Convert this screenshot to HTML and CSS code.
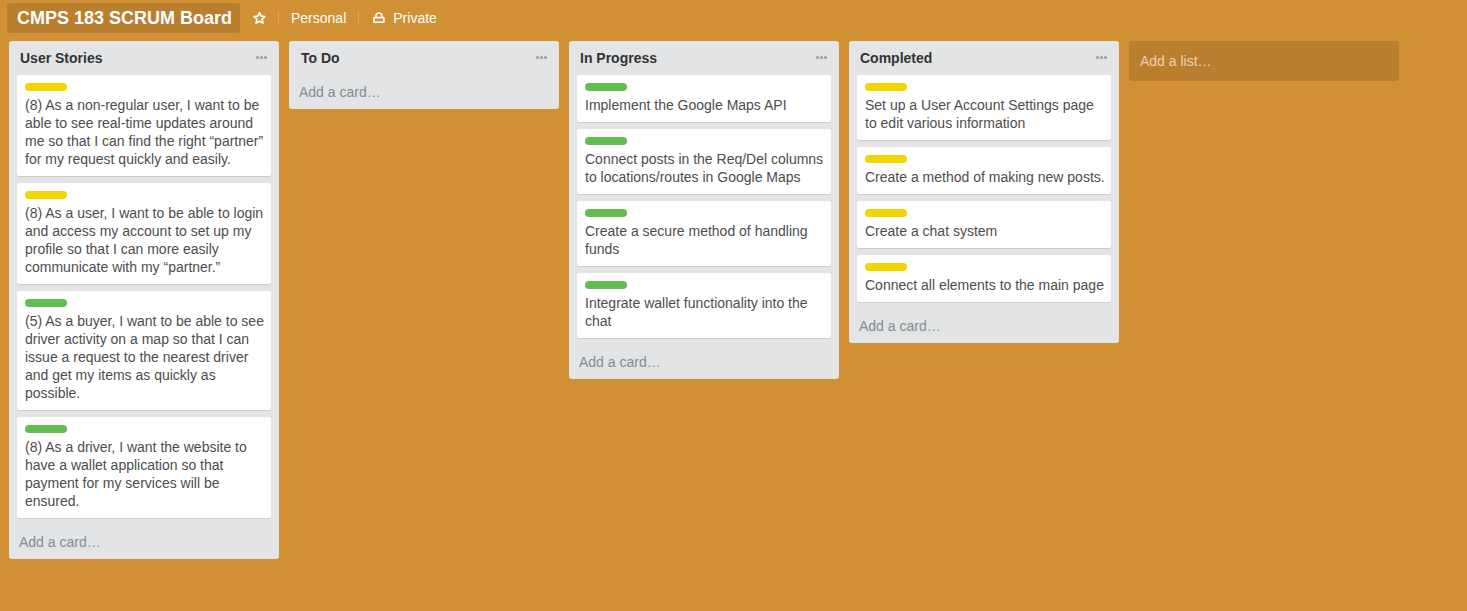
FILE: index.html
```html
<!DOCTYPE html>
<html lang="en">
<head>
<meta charset="utf-8">
<title>CMPS 183 SCRUM Board</title>
<link rel="stylesheet" href="styles.css">
</head>
<body>
<header class="board-header">
  <h1 class="board-name">CMPS 183 SCRUM Board</h1>
  <svg class="star" width="14" height="14" viewBox="0 0 14 14"><path d="M7.500 1.700 9.100 5.200l3.800.4-2.800 2.600.8 3.900-3.400-1.900-3.400 1.900.8-3.900-2.800-2.600 3.800-.4z" fill="none" stroke="#fff" stroke-width="1.700" stroke-linejoin="round"/></svg>
  <span class="divider"></span>
  <span class="org">Personal</span>
  <span class="divider"></span>
  <svg class="lock" width="12" height="12" viewBox="0 0 12 12"><path d="M2.900 5.500V4a3 3 0 0 1 6 0v1.500" fill="none" stroke="#fff" stroke-width="1.500"/><rect x=".9" y="5.600" width="10" height="4.700" rx=".6" fill="none" stroke="#fff" stroke-width="1.600"/></svg>
  <span class="visibility">Private</span>
</header>
<main class="board">
  <section class="list">
    <div class="list-header"><h2>User Stories</h2><span class="menu"><i></i><i></i><i></i></span></div>
    <article class="card"><div class="label yellow"></div><p>(8) As a non-regular user, I want to be able to see real-time updates around me so that I can find the right “partner” for my request quickly and easily.</p></article>
    <article class="card"><div class="label yellow"></div><p>(8) As a user, I want to be able to login and access my account to set up my profile so that I can more easily communicate with my “partner.”</p></article>
    <article class="card"><div class="label green"></div><p>(5) As a buyer, I want to be able to see driver activity on a map so that I can issue a request to the nearest driver and get my items as quickly as possible.</p></article>
    <article class="card"><div class="label green"></div><p>(8) As a driver, I want the website to have a wallet application so that payment for my services will be ensured.</p></article>
    <div class="add-card">Add a card…</div>
  </section>
  <section class="list">
    <div class="list-header"><h2 class="nudge">To Do</h2><span class="menu"><i></i><i></i><i></i></span></div>
    <div class="add-card">Add a card…</div>
  </section>
  <section class="list">
    <div class="list-header"><h2>In Progress</h2><span class="menu"><i></i><i></i><i></i></span></div>
    <article class="card"><div class="label green"></div><p>Implement the Google Maps API</p></article>
    <article class="card"><div class="label green"></div><p>Connect posts in the Req/Del columns to locations/routes in Google Maps</p></article>
    <article class="card"><div class="label green"></div><p>Create a secure method of handling funds</p></article>
    <article class="card"><div class="label green"></div><p>Integrate wallet functionality into the chat</p></article>
    <div class="add-card">Add a card…</div>
  </section>
  <section class="list">
    <div class="list-header"><h2>Completed</h2><span class="menu"><i></i><i></i><i></i></span></div>
    <article class="card"><div class="label yellow"></div><p>Set up a User Account Settings page to edit various information</p></article>
    <article class="card"><div class="label yellow"></div><p>Create a method of making new posts.</p></article>
    <article class="card"><div class="label yellow"></div><p>Create a chat system</p></article>
    <article class="card"><div class="label yellow"></div><p>Connect all elements to the main page</p></article>
    <div class="add-card">Add a card…</div>
  </section>
  <div class="add-list">Add a list…</div>
</main>
</body>
</html>
```

FILE: styles.css
```css
* { box-sizing: border-box; }
html, body { height: 100%; }
body {
  margin: 0;
  overflow: hidden;
  background: #d29034;
  color: #4d4d4d;
  font: 14px/18px "Liberation Sans", Arial, sans-serif;
}
h1, h2, p { margin: 0; }

.board-header {
  display: flex;
  align-items: center;
  height: 36px;
  padding-left: 7px;
  color: #fff;
}
.board-name {
  width: 233px;
  height: 30px;
  padding-left: 10px;
  border-radius: 3px;
  background: #b97e2e;
  font-size: 18px;
  line-height: 30px;
  white-space: nowrap;
}
.star { margin-left: 12px; }
.divider { width: 1px; height: 14px; margin: 0 12px; background: #dba75c; }
.lock { margin-left: 2px; margin-right: 8px; }

.board {
  display: flex;
  align-items: flex-start;
  gap: 10px;
  padding: 5px 0 0 9px;
}
.list {
  flex: 0 0 270px;
  padding: 0 8px;
  border-radius: 3px;
  background: #e2e4e6;
}
.list-header {
  display: flex;
  justify-content: space-between;
  height: 34px;
  padding: 8px 4px 8px 3px;
}
.list-header h2 { color: #333; font-size: 14px; line-height: 18px; }
.list-header .nudge { padding-left: 1px; }
.menu { display: flex; gap: 1px; padding-top: 7px; }
.menu i { width: 3px; height: 3px; border-radius: 1.5px; background: #999; }

.card {
  margin-bottom: 6px;
  padding: 8px 5px 8px 8px;
  border-bottom: 1px solid #ccc;
  border-radius: 3px;
  background: #fff;
}
.label { width: 42px; height: 8px; margin-bottom: 5px; border-radius: 4px; }
.yellow { background: #f2d600; }
.green { background: #61bd4f; }

.add-card { height: 34px; padding: 8px 2px; color: #838c91; }
.add-list {
  flex: 0 0 270px;
  height: 40px;
  padding: 11px;
  border-radius: 3px;
  background: #b97e2e;
  color: #ead3b4;
}
```
